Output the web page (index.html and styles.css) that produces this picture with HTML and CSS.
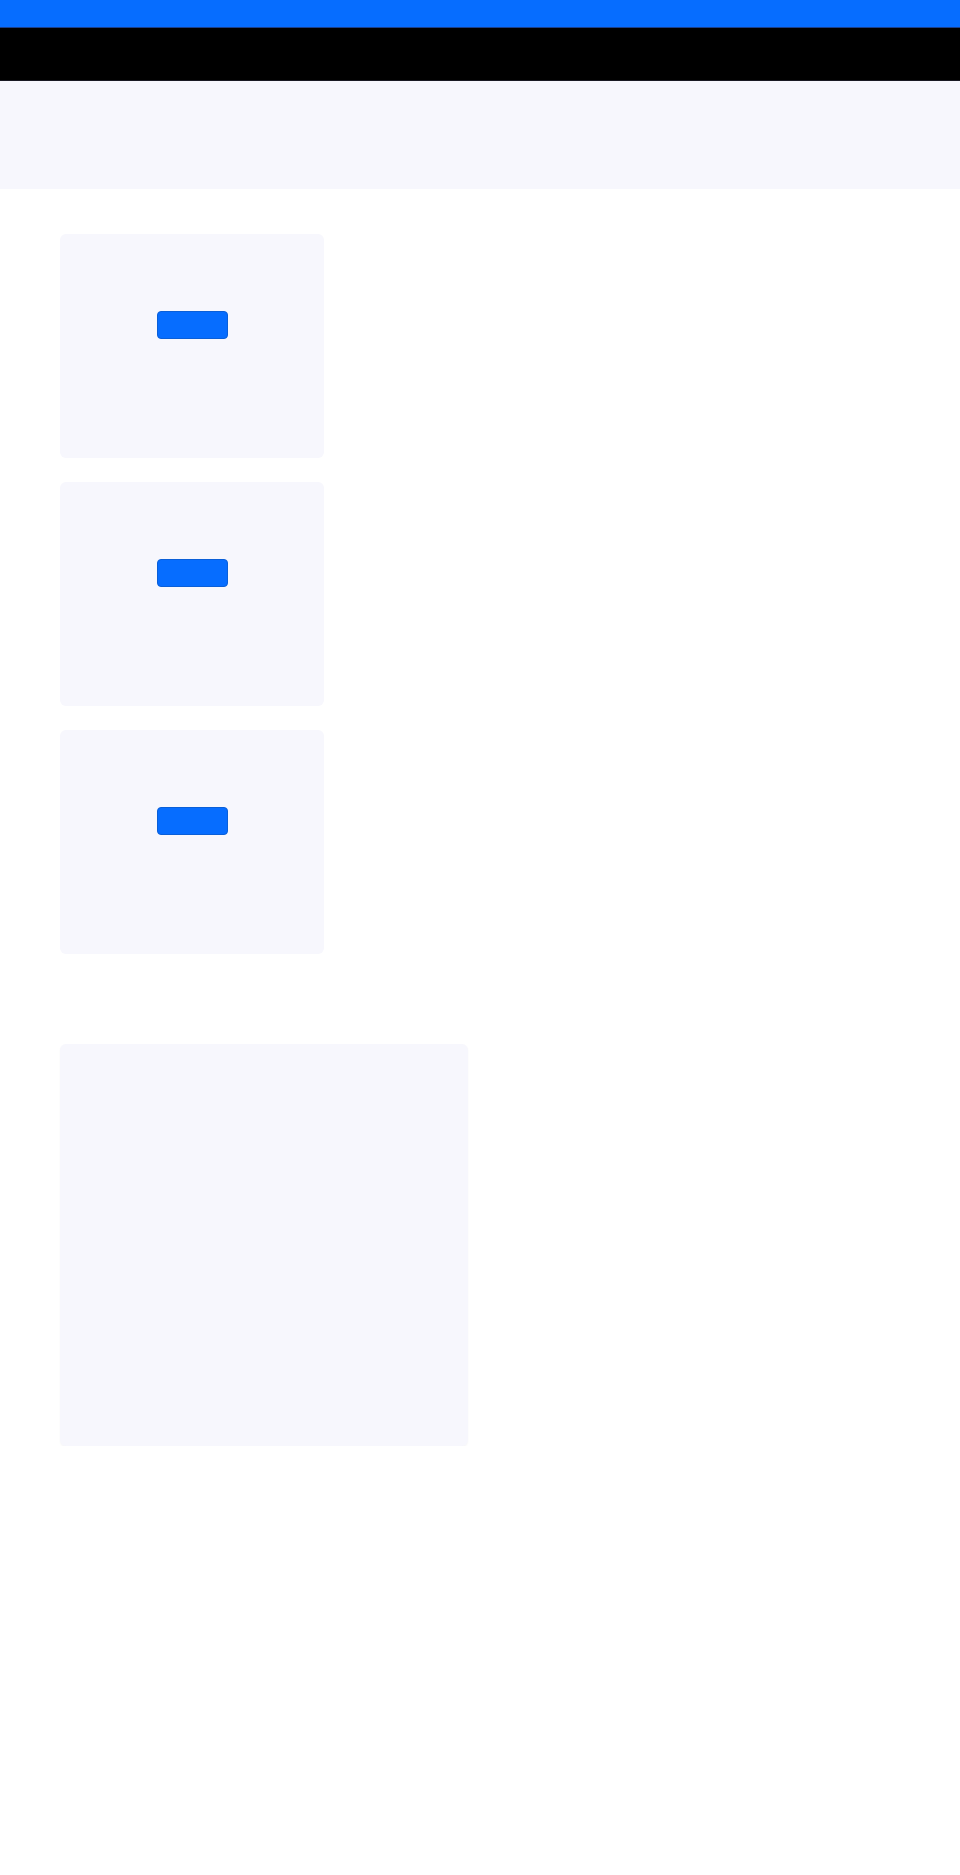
FILE: index.html
```html
<!DOCTYPE html>
<html lang="en">
<head>
<meta charset="UTF-8" />
<meta name="viewport" content="width=device-width, initial-scale=1" />
<title>Page</title>
<link rel="stylesheet" href="styles.css">
</head>
<body>
<div class="topbar"></div>
<header class="navbar"></header>
<section class="hero"></section>

<main>
    <section class="card-list">
        <div class="card">
            <button class="btn" type="button"></button>
        </div>
        <div class="card">
            <button class="btn" type="button"></button>
        </div>
        <div class="card">
            <button class="btn" type="button"></button>
        </div>
    </section>

    <section class="panel-section">
        <div class="panel"></div>
    </section>
</main>
</body>
</html>
```

FILE: styles.css
```css
* {
    box-sizing: border-box;
}
body {
    margin: 0;
    font-family: "Liberation Sans", Arial, sans-serif;
    background: #ffffff;
}
.topbar {
    height: 28px;
    background: #066dff;
    border-bottom: 1px solid #1a3f8a;
}
.navbar {
    height: 53px;
    background: #000000;
    border-bottom: 1px solid #1a1a24;
}
.hero {
    height: 108px;
    background: #f7f7fd;
}
main {
    padding: 45px 60px 0;
}
.card-list {
    display: flex;
    flex-direction: column;
    gap: 24px;
}
.card {
    width: 264px;
    height: 224px;
    background: #f7f7fd;
    border-radius: 6px;
    display: flex;
    justify-content: center;
    padding-top: 77px;
}
.btn {
    width: 71px;
    height: 28px;
    background: #066dff;
    border: 1px solid #0a5fd8;
    border-radius: 4px;
    padding: 0;
    cursor: pointer;
}
.panel-section {
    padding-top: 90px;
}
.panel {
    width: 408px;
    height: 402px;
    background: #f7f7fd;
    border-radius: 6px;
    box-shadow: 0 1px 2px rgba(0,0,0,0.04);
}
```
